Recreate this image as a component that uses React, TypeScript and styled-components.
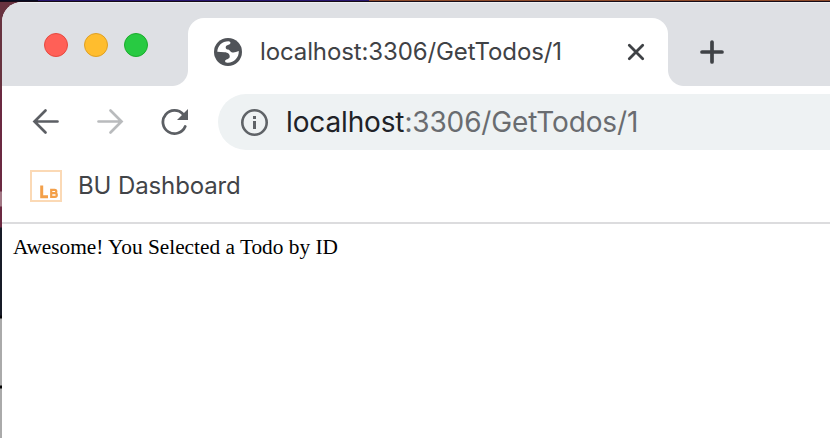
import React from 'react';
import styled, { createGlobalStyle } from 'styled-components';

const Global = createGlobalStyle`
  * { box-sizing: border-box; }
  body { margin: 0; overflow: hidden; background: #fff; }
  svg { display: block; flex: none; }
`;

const Desktop = styled.div`
  width: 830px;
  height: 438px;
  padding: 2px 0 0 2px;
  background:
    linear-gradient(90deg, #080b20 0 38px, #28166f 38px 369px, #8e4a2a 369px) 0 0 / 100% 1px no-repeat,
    linear-gradient(#160b17, #160b17) 0 1px / 100% 1px no-repeat,
    linear-gradient(#67323f 0 89px, #6b2941 90px 191px, #a17784 192px 206px, #6b2941 207px 227px, #171b27 228px 315px, #050508 316px 318px, #aaa 319px 385px, #050505 386px 388px, #aaa 389px);
`;

const Window = styled.main`
  height: 436px;
  overflow: hidden;
  border-top-left-radius: 20px;
  background: #fff;
`;

const TabStrip = styled.header`
  height: 84px;
  display: flex;
  align-items: flex-end;
  background: #dee0e4;
  box-shadow: inset 0 1px #eeeff1;
`;

const WindowControls = styled.div`
  width: 186px;
  height: 84px;
  padding: 31px 0 0 42px;
  display: flex;
  gap: 16px;
`;

const Light = styled.span<{ $fill: string; $edge: string }>`
  width: 24px;
  height: 24px;
  border-radius: 50%;
  background: ${p => p.$fill};
  border: 1px solid ${p => p.$edge};
`;

const Tab = styled.div`
  position: relative;
  width: 480px;
  height: 68px;
  padding: 0 20px 0 26px;
  display: flex;
  align-items: center;
  border-radius: 16px 16px 0 0;
  background: #fff;
  &::before, &::after {
    content: '';
    position: absolute;
    bottom: 0;
    width: 16px;
    height: 16px;
  }
  &::before { left: -16px; background: radial-gradient(circle at 0 0, transparent 15.5px, #fff 16.5px); }
  &::after { right: -16px; background: radial-gradient(circle at 100% 0, transparent 15.5px, #fff 16.5px); }
`;

const TabTitle = styled.span`
  width: 366px;
  margin-left: 18px;
  font: 400 24px/34px Inter, sans-serif;
  letter-spacing: -0.12px;
  color: #3f4246;
  white-space: nowrap;
`;

const NewTab = styled.div`
  height: 68px;
  padding: 22px 0 0 32px;
`;

const Toolbar = styled.nav`
  height: 72px;
  padding: 8px 0 8px 30px;
  display: flex;
  align-items: center;
`;

const NavButtons = styled.div`
  width: 186px;
  display: flex;
  gap: 36px;
`;

const AddressBar = styled.div`
  flex: 1;
  height: 56px;
  padding-left: 22px;
  display: flex;
  align-items: center;
  border-radius: 28px 0 0 28px;
  background: #eef2f3;
`;

const Url = styled.span`
  margin-left: 18px;
  font: 400 28px/40px Inter, sans-serif;
  letter-spacing: -0.14px;
  color: #696c70;
  white-space: nowrap;
`;

const Host = styled.span`
  color: #202227;
`;

const BookmarkBar = styled.div`
  height: 66px;
  padding: 12px 0 0 28px;
  display: flex;
  align-items: flex-start;
  border-bottom: 2px solid #dcdcde;
`;

const Bookmark = styled.span`
  margin-left: 16px;
  font: 400 24px/32px Inter, sans-serif;
  letter-spacing: -0.12px;
  color: #424448;
`;

const Document = styled.p`
  margin: 0;
  padding: 10px 11px;
  font: 21.33px/26px "Liberation Serif", "Times New Roman", serif;
  color: #000;
`;

const Globe = () => (
  <svg width="28" height="28" viewBox="0 0 28 28">
    <circle cx="14" cy="14" r="14" fill="#505358" />
    <path d="M3.3 13.8C3.4 8 8 3.3 14.5 3.3q2 .1 2 1.5c0 2.6-4.8 1.6-4.8 4.8 0 2.5 3 1.4 4.4 3.3 1.8 2.3 5 1.6 8.7.2C25 20 19.8 25 13.3 24.7q-2.5-.1-2.3-1.8c.2-1.7 4.4-1.4 4.7-4.2.3-2.5-2-4.4-5-4.5z" fill="#fff" />
  </svg>
);

const Arrow = ({ forward = false }: { forward?: boolean }) => (
  <svg width="28" height="28" viewBox="0 0 28 28" fill="none" stroke={forward ? '#b9bbbd' : '#5c5f64'} strokeWidth="2.7" strokeLinecap="round">
    {forward ? <path d="M2.5 13.5H25M14.5 2.5 25.5 13.5l-11 11" /> : <path d="M25.5 13.5H3M13.5 2.5 2.5 13.5l11 11" />}
  </svg>
);

export default function App() {
  return (
    <Desktop>
      <Global />
      <Window>
        <TabStrip>
          <WindowControls>
            <Light $fill="#ff6057" $edge="#e6493f" />
            <Light $fill="#ffbd2e" $edge="#dfa023" />
            <Light $fill="#28ca42" $edge="#1bac2c" />
          </WindowControls>
          <Tab>
            <Globe />
            <TabTitle>localhost:3306/GetTodos/1</TabTitle>
            <svg width="20" height="20" viewBox="0 0 20 20" fill="none" stroke="#3f4246" strokeWidth="2.8" strokeLinecap="round">
              <path d="m3.3 3.3 13.4 13.4m0-13.4-13.4 13.4" />
            </svg>
          </Tab>
          <NewTab>
            <svg width="24" height="24" viewBox="0 0 24 24" fill="none" stroke="#3f4246" strokeWidth="3.7" strokeLinecap="round">
              <path d="M12 2v20M2 12h20" />
            </svg>
          </NewTab>
        </TabStrip>
        <Toolbar>
          <NavButtons>
            <Arrow />
            <Arrow forward />
            <svg width="30" height="28" viewBox="0 0 30 28">
              <path d="M23.2 6.3A11.6 11.6 0 1 0 25.2 18.5" fill="none" stroke="#5c5f64" strokeWidth="2.8" strokeLinecap="round" />
              <path d="M28 1v11H17z" fill="#5c5f64" />
            </svg>
          </NavButtons>
          <AddressBar>
            <svg width="28" height="28" viewBox="0 0 28 28" fill="#5f6367">
              <circle cx="14.5" cy="14.5" r="12.2" fill="none" stroke="#5f6367" strokeWidth="2.6" />
              <path d="M13 8h3v3h-3zM13 13h3v8h-3z" />
            </svg>
            <Url><Host>localhost</Host>:3306/GetTodos/1</Url>
          </AddressBar>
        </Toolbar>
        <BookmarkBar>
          <svg width="32" height="32" viewBox="0 0 32 32">
            <path d="M1 1h30v30H1z" fill="#fff" stroke="#fbd9b5" strokeWidth="2" />
            <path d="M11.7 15.5v11.2H18" fill="none" stroke="#f3a04a" strokeWidth="3" />
            <path d="M21.2 19.8h3.5q1.6 0 1.6 1.7 0 1.6-1.6 1.6h-3.5zm0 3.3H25q1.8 0 1.8 1.9 0 1.8-1.8 1.8h-3.8z" fill="none" stroke="#f3a04a" strokeWidth="2.2" />
          </svg>
          <Bookmark>BU Dashboard</Bookmark>
        </BookmarkBar>
        <Document>Awesome! You Selected a Todo by ID</Document>
      </Window>
    </Desktop>
  );
}
